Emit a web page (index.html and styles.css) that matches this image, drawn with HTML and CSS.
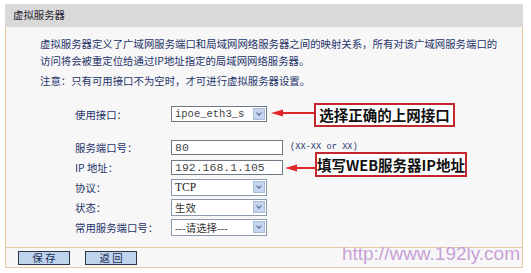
FILE: index.html
```html
<!DOCTYPE html>
<html lang="zh-CN">
<head>
    <meta charset="UTF-8">
    <title>虚拟服务器</title>
    <link rel="stylesheet" href="styles.css">
</head>
<body>
    <div class="panel">
        <div class="head">虚拟服务器</div>

        <div class="main">
            <p class="desc">虚拟服务器定义了广域网服务端口和局域网网络服务器之间的映射关系，所有对该广域网服务端口的访问将会被重定位给通过IP地址指定的局域网网络服务器。</p>
            <p class="note">注意：只有可用接口不为空时，才可进行虚拟服务器设置。</p>

            <div class="form">
                <div class="row first">
                    <label>使用接口：</label>
                    <div class="select mono">ipoe_eth3_s<span class="drop"></span></div>
                </div>
                <div class="row">
                    <label>服务端口号：</label>
                    <div class="input mono">80</div>
                    <span class="hint">(XX-XX or XX)</span>
                </div>
                <div class="row">
                    <label>IP 地址：</label>
                    <div class="input mono">192.168.1.105</div>
                </div>
                <div class="row">
                    <label>协议：</label>
                    <div class="select serif">TCP<span class="drop"></span></div>
                </div>
                <div class="row">
                    <label>状态：</label>
                    <div class="select">生效<span class="drop"></span></div>
                </div>
                <div class="row">
                    <label>常用服务端口号：</label>
                    <div class="select">---请选择---<span class="drop"></span></div>
                </div>
            </div>
        </div>

        <div class="foot">
            <button>保 存</button>
            <button>返 回</button>
            <span class="mark">http://www.192ly.com</span>
        </div>

        <!-- 标注 -->
        <svg class="arrow arrow-1" width="44" height="8" viewBox="0 0 44 8">
            <path d="M10 4 H44" stroke="#e02828" stroke-width="2"/>
            <path d="M0 4 L12 0.5 L12 7.5 Z" fill="#e02828"/>
        </svg>
        <div class="callout callout-1">选择正确的上网接口</div>

        <svg class="arrow arrow-2" width="32" height="8" viewBox="0 0 32 8">
            <path d="M10 4 H32" stroke="#e02828" stroke-width="2"/>
            <path d="M0 4 L12 0.5 L12 7.5 Z" fill="#e02828"/>
        </svg>
        <div class="callout callout-2">填写WEB服务器IP地址</div>
    </div>
</body>
</html>
```

FILE: styles.css
```css
body {
    margin: 0;
    padding: 4px 0 0 5px;
    background: #fff;
    font-family: "Noto Sans CJK SC", "Liberation Sans", sans-serif;
    font-size: 10.4px;
    color: #25346a;
}
.panel {
    position: relative;
    width: 518px;
}
.head {
    height: 23px;
    line-height: 22px;
    padding-left: 8px;
    background: #d9d9d9;
    color: #1d1d2e;
}
.main {
    background: #f7f7f7;
    border-left: 1px solid #ecc99c;
    border-right: 1px solid #ecc99c;
    padding: 8px 20px 10px 34px;
}
p {
    margin: 0;
    line-height: 17px;
}
.note {
    margin-top: 3px;
}
.form {
    margin: 15px 0 0 35px;
}
.row {
    display: flex;
    align-items: center;
    height: 20px;
}
.row.first {
    margin-bottom: 13px;
}
.row label {
    width: 96px;
}
.input, .select {
    box-sizing: border-box;
    position: relative;
    background: #fff;
    border: 1px solid #6d7a86;
    padding-left: 3px;
    color: #333;
}
.input {
    width: 112px;
    height: 15px;
    line-height: 13px;
    font-size: 11.5px;
}
.select {
    width: 96px;
    height: 17px;
    line-height: 15px;
    border-color: #8a9aac;
}
.mono {
    font-family: "Liberation Mono", monospace;
    color: #444;
}
.select.mono {
    font-size: 10.5px;
    height: 16px;
    border-color: #6d7a86;
}
.serif {
    font-family: "Liberation Serif", serif;
    font-size: 11.5px;
    color: #222;
}
.drop {
    position: absolute;
    right: 1px;
    top: 1px;
    width: 12px;
    height: 12px;
    background: #c6d6ee;
    border: 1px solid #a9bcd8;
    box-sizing: border-box;
}
.drop::after {
    content: "";
    position: absolute;
    left: 3px;
    top: 2px;
    width: 3px;
    height: 3px;
    border-right: 1.5px solid #4a5f8c;
    border-bottom: 1.5px solid #4a5f8c;
    transform: rotate(45deg);
}
.hint {
    margin-left: 7px;
    font-family: "Liberation Mono", monospace;
    font-size: 8.7px;
    color: #2a3a70;
}
.foot {
    position: relative;
    height: 19px;
    background: #f7f7f7;
    border: 1px solid #e6cba2;
    display: flex;
    align-items: center;
    gap: 15px;
    padding-left: 12px;
}
button {
    width: 52px;
    height: 14px;
    padding: 0;
    border: 1px solid #2c3644;
    background: #bed4ec;
    font-family: "Noto Sans CJK SC", sans-serif;
    font-size: 10.4px;
    line-height: 12px;
    color: #1c2a52;
}
.mark {
    position: absolute;
    right: 2px;
    top: -5px;
    font-family: "Liberation Sans", Arial, sans-serif;
    font-size: 19px;
    color: #c9a1d7;
}
.callout {
    position: absolute;
    box-sizing: border-box;
    background: #fff;
    border: 2px solid #c4262e;
    font-family: "Noto Sans CJK SC", sans-serif;
    font-weight: bold;
    font-size: 14.5px;
    color: #111;
    text-align: center;
    white-space: nowrap;
}
.callout-1 {
    left: 309px;
    top: 99px;
    width: 141px;
    height: 24px;
    line-height: 20px;
}
.callout-2 {
    left: 310px;
    top: 148px;
    width: 152px;
    height: 25px;
    line-height: 21px;
}
.arrow {
    position: absolute;
}
.arrow-1 {
    left: 266px;
    top: 105px;
}
.arrow-2 {
    left: 280px;
    top: 160px;
}
```
